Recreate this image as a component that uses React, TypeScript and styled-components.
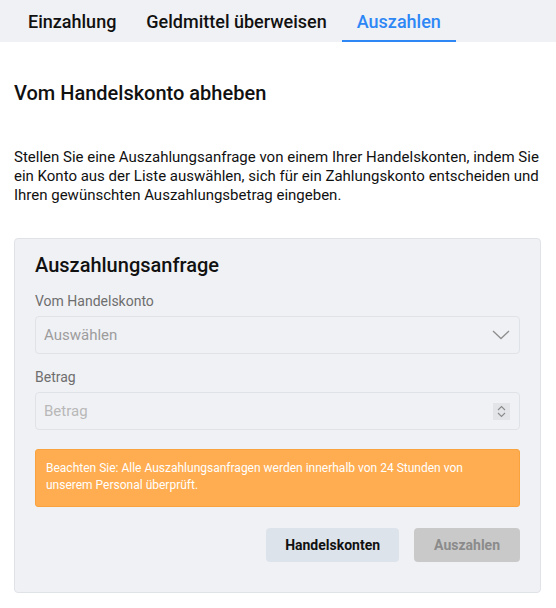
import React from "react";
import styled, { createGlobalStyle } from "styled-components";

const Global = createGlobalStyle`
  html, body { margin: 0; padding: 0; background: #ffffff; }
  body { font-family: Roboto, "Noto Sans", Arial, sans-serif; color: #111; }
  * { box-sizing: border-box; }
`;

const Page = styled.div`
  width: 556px;
`;

const TabBar = styled.nav`
  display: flex;
  background: #f0f1f5;
  padding: 0 13px;
  height: 42px;
`;

const Tab = styled.div<{ $active?: boolean }>`
  padding: 0 15px;
  display: flex;
  align-items: center;
  font-size: 18px;
  font-weight: 500;
  color: ${(p) => (p.$active ? "#2d87f5" : "#111111")};
  border-bottom: 2px solid ${(p) => (p.$active ? "#2d87f5" : "transparent")};
  padding-top: 2px;
`;

const Content = styled.main`
  padding: 0 15px 0 14px;
`;

const Title = styled.h1`
  margin: 39px 0 0;
  font-size: 20px;
  font-weight: 500;
  line-height: 24px;
`;

const Intro = styled.p`
  margin: 43px 0 0;
  font-size: 15px;
  line-height: 19px;
  color: #111;
`;

const Card = styled.section`
  margin-top: 33px;
  background: #f0f1f5;
  border: 1px solid #dfe2e7;
  border-radius: 4px;
  padding: 14px 20px 30px;
`;

const CardTitle = styled.h2`
  margin: 0;
  font-size: 20px;
  font-weight: 500;
  line-height: 24px;
`;

const Label = styled.div<{ $gap: number }>`
  margin-top: ${(p) => p.$gap}px;
  font-size: 14px;
  line-height: 18px;
  color: #6e6e6e;
`;

const Field = styled.div<{ $muted?: boolean }>`
  margin-top: 6px;
  height: 38px;
  border: 1px solid #dfe3e8;
  border-radius: 4px;
  display: flex;
  align-items: center;
  justify-content: space-between;
  padding: 0 9px 0 8px;
  font-size: 15px;
  color: ${(p) => (p.$muted ? "#b8b8b8" : "#9c9c9c")};
`;

const Spinner = styled.div`
  width: 17px;
  height: 17px;
  background: #e2e4e8;
  display: flex;
  align-items: center;
  justify-content: center;
`;

const Notice = styled.div`
  margin-top: 19px;
  background: #ffad50;
  border: 1px solid #f9a33f;
  border-radius: 3px;
  padding: 10px 10px 12px;
  font-size: 12px;
  line-height: 17px;
  color: #ffffff;
`;

const Actions = styled.div`
  margin-top: 21px;
  display: flex;
  justify-content: flex-end;
  gap: 15px;
`;

const Button = styled.button<{ $disabled?: boolean }>`
  height: 34px;
  border: none;
  border-radius: 4px;
  font-family: inherit;
  font-size: 14px;
  font-weight: 700;
  padding: 0 ${(p) => (p.$disabled ? "20px" : "19px")};
  background: ${(p) => (p.$disabled ? "#c9c9c9" : "#dde3ea")};
  color: ${(p) => (p.$disabled ? "#8b8b8b" : "#111111")};
`;

export default function App() {
  return (
    <Page>
      <Global />
      <TabBar>
        <Tab>Einzahlung</Tab>
        <Tab>Geldmittel überweisen</Tab>
        <Tab $active>Auszahlen</Tab>
      </TabBar>
      <Content>
        <Title>Vom Handelskonto abheben</Title>
        <Intro>
          Stellen Sie eine Auszahlungsanfrage von einem Ihrer Handelskonten, indem Sie ein Konto aus der
          Liste auswählen, sich für ein Zahlungskonto entscheiden und Ihren gewünschten Auszahlungsbetrag
          eingeben.
        </Intro>
        <Card>
          <CardTitle>Auszahlungsanfrage</CardTitle>
          <Label $gap={15}>Vom Handelskonto</Label>
          <Field>
            <span>Auswählen</span>
            <svg width="18" height="10" viewBox="0 0 18 10" fill="none">
              <path d="M1 1l8 7.5L17 1" stroke="#8e8e8e" strokeWidth="1.3" />
            </svg>
          </Field>
          <Label $gap={14}>Betrag</Label>
          <Field $muted>
            <span>Betrag</span>
            <Spinner>
              <svg width="9" height="13" viewBox="0 0 9 13" fill="none">
                <path d="M1 5l3.5-3.5L8 5M1 8l3.5 3.5L8 8" stroke="#8a8a8a" strokeWidth="1.1" />
              </svg>
            </Spinner>
          </Field>
          <Notice>
            Beachten Sie: Alle Auszahlungsanfragen werden innerhalb von 24 Stunden von unserem Personal
            überprüft.
          </Notice>
          <Actions>
            <Button>Handelskonten</Button>
            <Button $disabled>Auszahlen</Button>
          </Actions>
        </Card>
      </Content>
    </Page>
  );
}
